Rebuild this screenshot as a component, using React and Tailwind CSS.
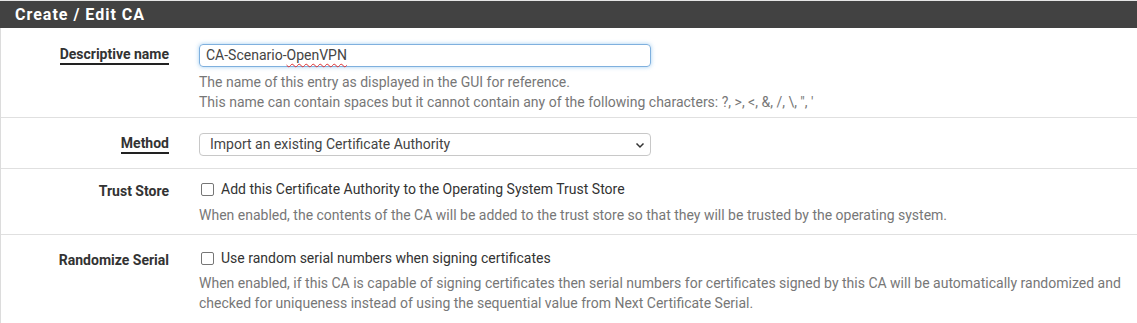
import React from "react";

function Row({ label, underline, children, className = "" }) {
  return (
    <div className={`flex border-b border-[#e0e0e0] ${className}`}>
      <div className={`w-[183px] shrink-0 pr-[15px] text-right ${underline ? "-mt-[2px]" : ""}`}>
        <span
          className={`text-[14px] font-bold text-[#333] leading-[20px] ${
            underline ? "border-b-2 border-[#222] pb-[1px]" : ""
          }`}
        >
          {label}
        </span>
      </div>
      <div className="flex-1 pl-[15px] pr-[14px]">{children}</div>
    </div>
  );
}

function Check({ text }) {
  return (
    <div className="flex items-center h-[20px]">
      <span className="w-[13px] h-[13px] border border-[#767676] rounded-[2px] bg-white mr-[7px] ml-[2px]" />
      <span className="text-[14px] text-[#333] leading-[20px]">{text}</span>
    </div>
  );
}

export default function App() {
  return (
    <div
      className="w-[1137px] h-[323px] bg-white overflow-hidden"
      style={{ fontFamily: "Roboto, 'Liberation Sans', sans-serif" }}
    >
      <div className="border-t border-[#e5e5e5] bg-[#424242] h-[28px] flex items-center pl-[15px]">
        <span className="text-white font-bold text-[16px] tracking-[1px]">Create / Edit CA</span>
      </div>
      <div className="border-l border-[#dcdcdc]">
        <Row label="Descriptive name" underline className="pt-[16px] pb-[5px]">
          <div className="w-[452px] h-[23px] border border-[#7fb0de] rounded-[4px] shadow-[0_0_4px_rgba(102,175,233,0.6)] flex items-center px-[6px] text-[14px] text-[#444]">
            CA-Scenario-
            <span className="underline decoration-wavy decoration-[#e03030] decoration-1 underline-offset-[3px]">
              OpenVPN
            </span>
          </div>
          <div className="mt-[5px] text-[14px] leading-[20px] text-[#777]">
            <div>The name of this entry as displayed in the GUI for reference.</div>
            <div>
              This name can contain spaces but it cannot contain any of the following characters: ?, &gt;, &lt;, &amp;, /, \, ", '
            </div>
          </div>
        </Row>
        <Row label="Method" underline className="pt-[15px] pb-[12px]">
          <div className="w-[452px] h-[23px] border border-[#c8c8c8] rounded-[4px] flex items-center justify-between pl-[10px] pr-[5px] text-[14px] text-[#444]">
            <span>Import an existing Certificate Authority</span>
            <svg width="10" height="10" viewBox="0 0 10 10" fill="none">
              <path d="M1.5 3.5 L5 7 L8.5 3.5" stroke="#333" strokeWidth="1.5" />
            </svg>
          </div>
        </Row>
        <Row label="Trust Store" className="pt-[10px] pb-[9px]">
          <Check text="Add this Certificate Authority to the Operating System Trust Store" />
          <div className="mt-[6px] text-[14px] leading-[20px] text-[#777]">
            When enabled, the contents of the CA will be added to the trust store so that they will be trusted by the operating system.
          </div>
        </Row>
        <Row label="Randomize Serial" className="pt-[13px] pb-[10px] border-b-0">
          <Check text="Use random serial numbers when signing certificates" />
          <div className="mt-[5px] text-[14px] leading-[20px] text-[#777]">
            When enabled, if this CA is capable of signing certificates then serial numbers for certificates signed by this CA will be automatically randomized and checked for uniqueness instead of using the sequential value from Next Certificate Serial.
          </div>
        </Row>
      </div>
    </div>
  );
}
